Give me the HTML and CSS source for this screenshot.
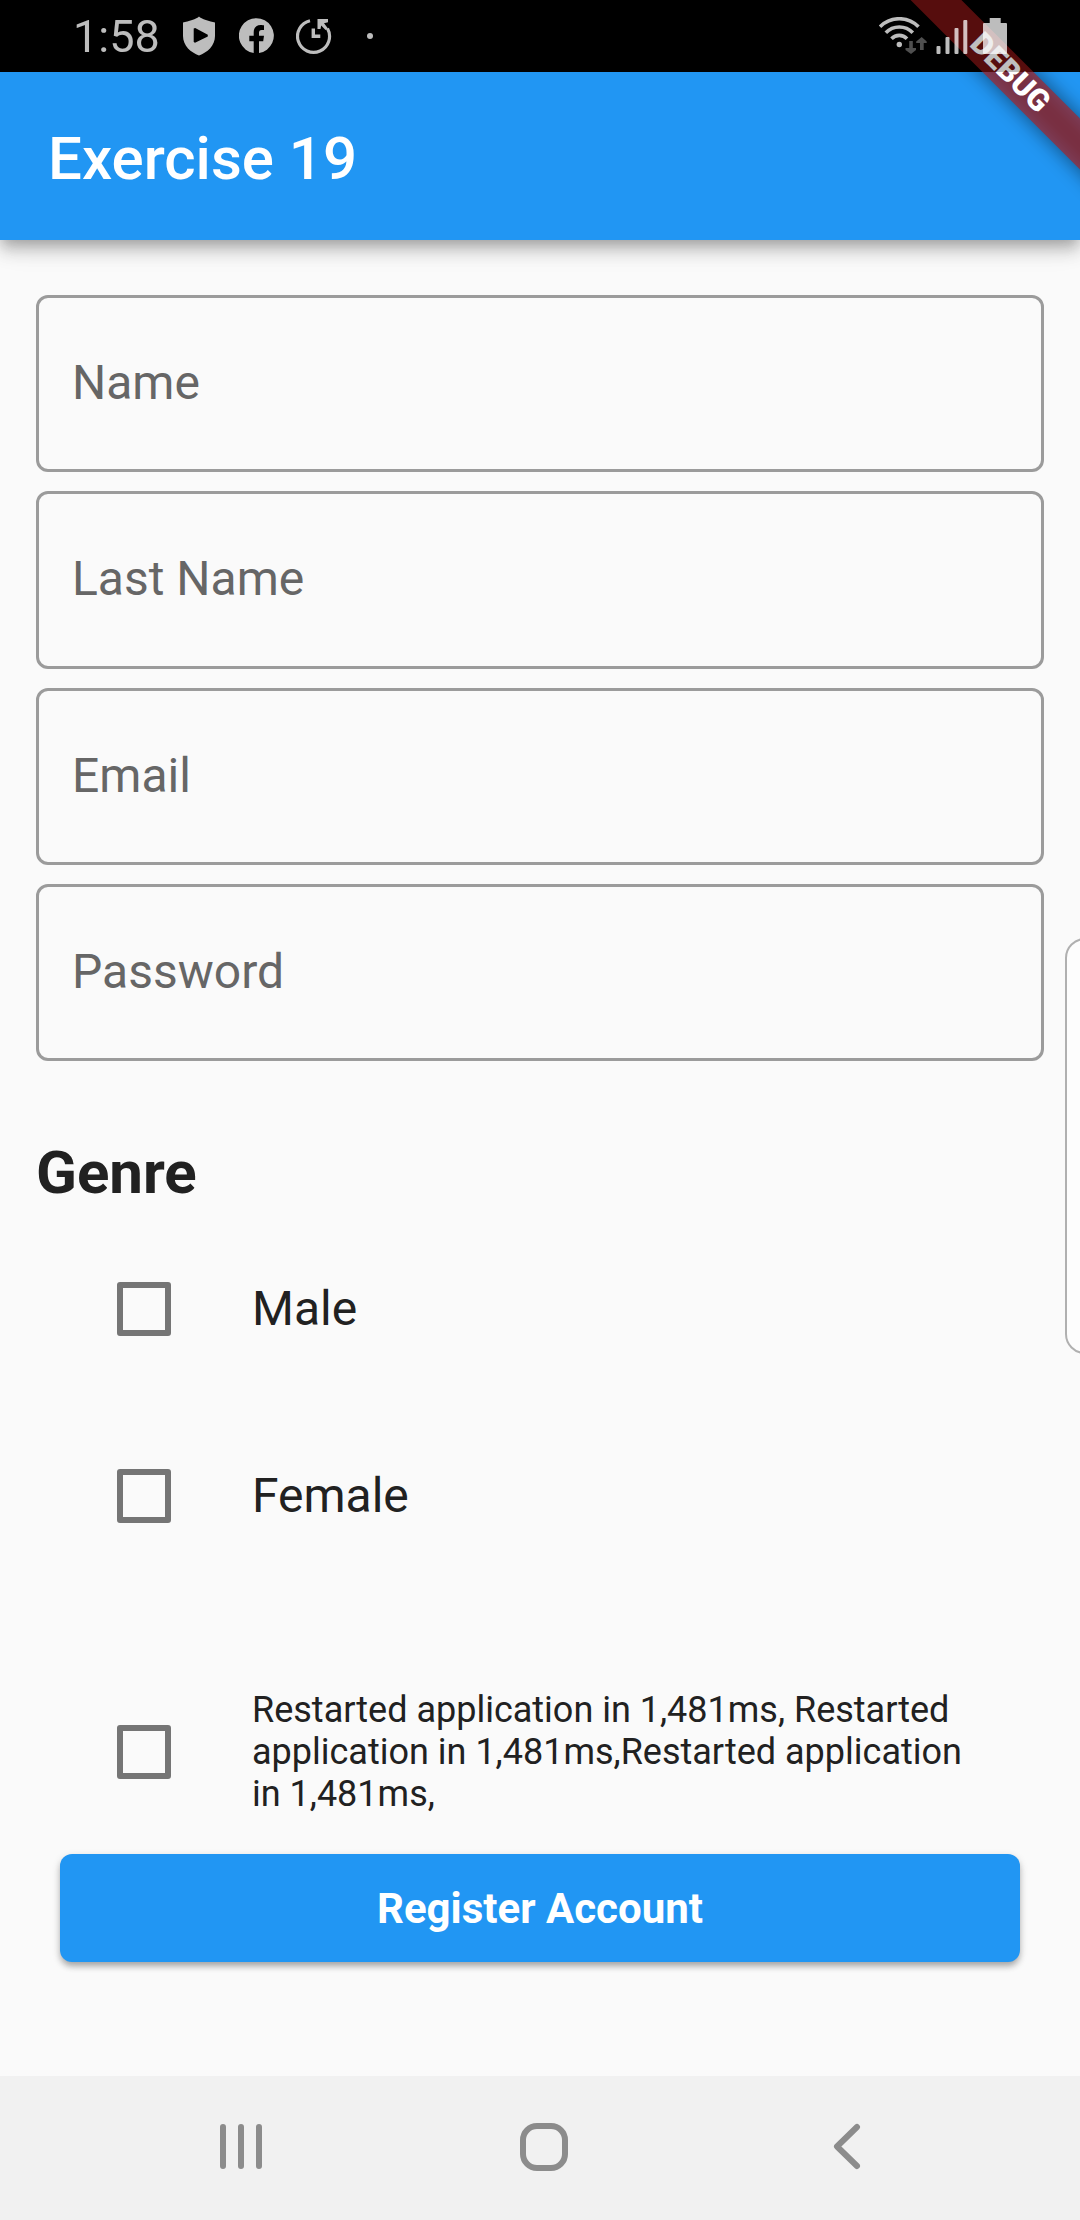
FILE: index.html
```html
<!DOCTYPE html>
<html lang="en">
<head>
<meta charset="utf-8">
<title>Exercise 19</title>
<link rel="stylesheet" href="styles.css">
</head>
<body>
<div class="screen">
  <div class="status-bar">
    <div class="status-left">
      <span class="clock">1:58</span>
      <svg class="shield" width="32" height="40" viewBox="0 0 32 40"><path fill-rule="evenodd" d="M16 .5 C18 3 27 5.500 32 6.500 V20 C32 30 24 36.500 16 39.500 C8 36.500 0 30 0 20 V6.500 C5 5.500 14 3 16 .5Z M10.700 12.500 V26 L12 26.800 L24.800 20.500 V18.800 L12.200 11.900Z"/></svg>
      <svg class="facebook" width="36" height="36" viewBox="0 0 36 36"><path d="M14.700 35 V23.200 H10.300 V17.800 H14.700 V14.500 C14.700 9.500 17.500 7 21.700 7 C23.300 7 25 7.300 25 7.300 V12 H22.700 C20.700 12 20 13.200 20 14.700 V17.800 H25 L24.200 23.200 H20 V35 A17.500 17.500 0 1 0 14.700 35Z"/></svg>
      <svg class="alarm" width="36" height="36" viewBox="0 0 36 36"><path class="line" d="M14 2.700 A16 16 0 1 0 31.500 10.500" stroke-width="3.200"/><path d="M21.500 1 H32 V4.200 L28 5.200 L32 10.500 L29.500 12 L25.200 7.500 L24.500 11 H21.500Z"/><path class="line" d="M17.300 10.500 V18.300 H24.300" stroke-width="3.400"/></svg>
      <i class="more-dot"></i>
    </div>
    <div class="status-right">
      <svg width="130" height="38" viewBox="0 0 130 38">
        <g class="line" stroke-width="3.600"><path d="M1 9.800 A27 27 0 0 1 39.500 9.800"/><path d="M6.800 15.800 A18.500 18.500 0 0 1 33.800 15.800"/><path d="M12.500 21.700 A10.700 10.700 0 0 1 28 21.700"/></g>
        <circle cx="20.300" cy="27.500" r="2.700"/>
        <g class="traffic"><path d="M30.200 24 H33.800 V31 H37 V33 L32 37 L26.500 33 V31 H30.200Z"/><path d="M41 33 V26 H37.200 V24.500 L42.700 20 L47.700 24.500 V26 H44.700 V33Z"/></g>
        <g><rect x="57.500" y="29" width="4" height="8" rx="1"/><rect x="66.500" y="20" width="4" height="17" rx="1"/><rect x="75.500" y="11" width="4" height="26" rx="1"/><rect x="84.300" y="3" width="4" height="34" rx="1"/></g>
        <path d="M110.700 1 H121.700 V6 H127 Q128 6 128 7 V36 Q128 37 127 37 H105 Q104 37 104 36 V7 Q104 6 105 6 H110.700Z"/>
      </svg>
    </div>
  </div>
  <header class="app-bar"><h1>Exercise 19</h1></header>
  <main class="content">
    <div class="fields">
      <div class="field">Name</div>
      <div class="field">Last Name</div>
      <div class="field">Email</div>
      <div class="field">Password</div>
    </div>
    <h2 class="section-title">Genre</h2>
    <div class="option"><i class="checkbox"></i><span>Male</span></div>
    <div class="option"><i class="checkbox"></i><span>Female</span></div>
    <div class="option terms"><i class="checkbox"></i><span>Restarted application in 1,481ms, Restarted application in 1,481ms,Restarted application in 1,481ms,</span></div>
    <div class="register">Register Account</div>
  </main>
  <nav class="nav-bar">
    <svg width="48" height="48" viewBox="0 0 48 48"><path d="M6 4 V43 M24 4 V43 M42 4 V43"/></svg>
    <svg width="48" height="48" viewBox="0 0 48 48"><rect x="3" y="3" width="42" height="42" rx="14"/></svg>
    <svg width="48" height="48" viewBox="0 0 48 48"><path d="M34 4 L14 23.500 L34 43"/></svg>
  </nav>
  <div class="edge-handle"></div>
  <div class="banner-clip"><div class="banner-shadow"></div><div class="banner">DEBUG</div></div>
</div>
</body>
</html>
```
FILE: styles.css
```css
* { box-sizing: border-box; }
body { margin: 0; font-family: Roboto, sans-serif; color: #212121; }
.screen { position: relative; width: 1080px; height: 2220px; overflow: hidden; display: flex; flex-direction: column; background: linear-gradient(#000 72px, #fafafa 72px); }
svg { display: block; flex: none; }

/* Translucent scrim: the debug ribbon shows through beneath the icons. */
.status-bar { position: relative; z-index: 5; flex: none; height: 72px; display: flex; justify-content: space-between; background: rgba(0,0,0,.25); }
.status-bar svg { fill: #fff; }
.status-bar .line { fill: none; stroke: #fff; }
.status-bar .traffic { fill-opacity: .42; }
.status-left { display: flex; align-items: center; padding-left: 73px; color: #fff; opacity: .74; }
.clock { width: 110px; font-size: 45px; line-height: 72px; padding-top: 2px; }
.facebook { margin-left: 24px; }
.alarm { margin-left: 21px; }
.more-dot { width: 6px; height: 6px; margin-left: 35px; border-radius: 50%; background: #fff; }
.status-right { padding: 17px 71px 0 0; opacity: .74; }

.app-bar { position: relative; z-index: 2; flex: none; height: 168px; display: flex; align-items: center; padding: 5px 0 0 48px; background: #2196f3; color: #fff; box-shadow: 0 6px 12px -3px rgba(0,0,0,.2), 0 12px 15px rgba(0,0,0,.14), 0 3px 30px rgba(0,0,0,.12); clip-path: inset(0 0 -60px 0); }
h1 { margin: 0; font-size: 60px; line-height: 70px; font-weight: 500; }

.content { flex: 1; padding: 55px 36px 0; display: flex; flex-direction: column; }
.fields { display: flex; flex-direction: column; gap: 19px; }
.field { height: 177.3px; display: flex; align-items: center; padding: 0 0 1px 33px; border: 3px solid #9b9b9b; border-radius: 12px; font-size: 48px; line-height: 56px; color: #666; }
.section-title { margin: 77px 0 7px; font-size: 60px; line-height: 70px; font-weight: 700; }
.option { flex: none; display: flex; align-items: center; height: 187px; padding-left: 81px; font-size: 48px; line-height: 56px; }
.option span { width: 720px; }
.checkbox { flex: none; width: 54px; height: 54px; margin-right: 81px; border: 6px solid #757575; border-radius: 3px; }
.terms { height: 204px; margin-top: 61px; font-size: 36px; line-height: 42px; }
.register { height: 108px; margin: 0 24px; border-radius: 12px; background: #2196f3; color: #fff; font-size: 42px; font-weight: 700; line-height: 110px; text-align: center; box-shadow: 0 5px 6px -1px rgba(0,0,0,.24), 0 3px 9px rgba(0,0,0,.16); }

.nav-bar { flex: none; height: 144px; display: flex; align-items: center; justify-content: space-between; padding: 0 209px 2px 217px; background: #f1f1f1; }
.nav-bar svg { fill: none; stroke: #8c8c8c; stroke-width: 6px; stroke-linecap: round; stroke-linejoin: round; }

.edge-handle { position: absolute; left: 1065px; top: 938px; width: 40px; height: 416px; border: 2px solid #b0b0b0; border-radius: 20px; background: #fdfdfd; }

.banner-clip { position: absolute; z-index: 4; top: 0; right: 0; width: 300px; height: 300px; overflow: hidden; pointer-events: none; }
.banner, .banner-shadow { position: absolute; left: 108px; top: 54px; width: 240px; height: 36px; transform: rotate(45deg); }
.banner { padding-left: 4px; background: rgba(183,28,28,.627); color: #fff; font-size: 30.600px; font-weight: 900; line-height: 34px; text-align: center; }
.banner-shadow { width: 400px; left: 28px; background: rgba(0,0,0,.5); filter: blur(10px); }
```
